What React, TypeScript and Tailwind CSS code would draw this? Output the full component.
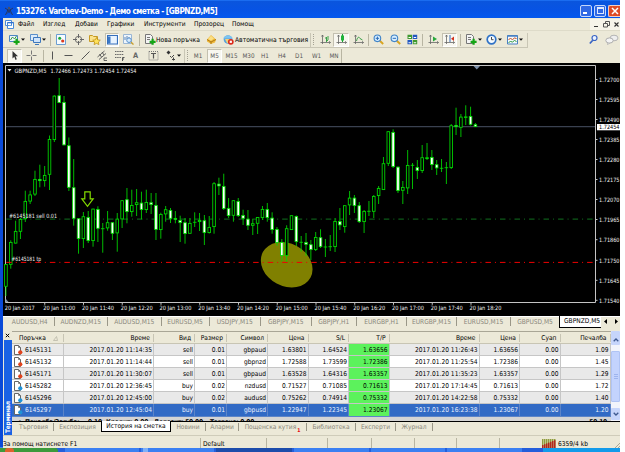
import React from 'react';
import clsx from 'clsx';

type CandleKind = 'up' | 'down' | 'doji';

// [high, low, body top, body bottom, kind]
type Candle = [number, number, number, number, CandleKind];

const CANDLES: Candle[] = [
  [264, 296, 264, 286.7, 'up'],
  [240.3, 268.7, 242, 264.7, 'up'],
  [220.7, 243.5, 231, 243.5, 'up'],
  [218, 239, 219, 231.7, 'up'],
  [190.7, 222, 201, 219, 'up'],
  [190.7, 204, 194.5, 201.5, 'up'],
  [170.7, 196, 179, 194.5, 'up'],
  [164.7, 187.3, 179, 181, 'down'],
  [166, 186.7, 175, 181, 'up'],
  [135.5, 190, 139, 174.7, 'up'],
  [95.3, 142, 95.7, 140, 'up'],
  [78, 103, 95.3, 103, 'down'],
  [96, 145.3, 102, 145.3, 'down'],
  [137.5, 191, 145.3, 187.7, 'down'],
  [159, 225.7, 187.3, 218.7, 'down'],
  [218.3, 253.7, 218.3, 239, 'down'],
  [212, 248, 216.3, 239, 'up'],
  [211, 243, 217, 241, 'down'],
  [208.7, 246.7, 208.7, 241, 'up'],
  [206.3, 242, 209, 228.7, 'down'],
  [223, 252.7, 228.7, 228.7, 'doji'],
  [211, 230.7, 222.3, 228.3, 'up'],
  [222, 240, 222.3, 233.7, 'down'],
  [213, 251.7, 218.7, 233.3, 'up'],
  [200, 228, 200.3, 219.3, 'up'],
  [188, 223.3, 199.3, 212, 'down'],
  [189.7, 216.7, 205, 212, 'up'],
  [189, 216, 202.3, 205, 'up'],
  [191.7, 219.3, 202.7, 210, 'down'],
  [189.7, 213, 202, 210, 'up'],
  [193, 214, 202.3, 205, 'down'],
  [193, 240, 205, 229.8, 'down'],
  [212.7, 238.7, 214, 230, 'up'],
  [206, 221.7, 209.3, 214.3, 'up'],
  [208, 223, 210, 218.7, 'down'],
  [211, 223.3, 218, 219.7, 'down'],
  [215.7, 242, 220, 223, 'down'],
  [218, 243.7, 222.3, 234, 'down'],
  [218, 233.7, 223, 233.7, 'up'],
  [212.3, 227, 222.3, 222.3, 'doji'],
  [213, 231, 220, 222, 'up'],
  [215, 245, 220.3, 233, 'down'],
  [216, 233.5, 227, 233, 'up'],
  [182, 233.7, 183.3, 227, 'up'],
  [177.7, 195, 183.7, 186.3, 'down'],
  [173.7, 210, 186, 209, 'down'],
  [198, 218, 208, 216, 'down'],
  [200.3, 221.7, 200.3, 215.7, 'up'],
  [198, 217, 201, 216, 'down'],
  [209.7, 225, 215, 218.7, 'down'],
  [210, 230, 218.7, 225.7, 'down'],
  [218.7, 235, 223.3, 225.7, 'up'],
  [217, 234, 217, 223.7, 'up'],
  [206, 220, 209, 218, 'up'],
  [203, 221.7, 209, 218, 'down'],
  [212.3, 233.7, 217.7, 230, 'down'],
  [227, 245.7, 229, 243, 'down'],
  [239, 261.3, 242, 256, 'down'],
  [225.3, 262, 228.3, 256, 'up'],
  [215.3, 230, 215.3, 230, 'up'],
  [215.5, 246, 216, 242, 'down'],
  [236, 251.7, 242.3, 242.3, 'doji'],
  [233, 256, 242, 244.7, 'down'],
  [240, 260, 244.3, 250, 'down'],
  [232, 251, 237, 250, 'up'],
  [229.3, 248, 237.3, 247, 'down'],
  [239, 257, 247, 247, 'doji'],
  [235, 251, 246.7, 246.7, 'doji'],
  [218, 252, 221, 247, 'up'],
  [208, 230, 221, 225.3, 'down'],
  [205.3, 232.7, 205.3, 227, 'up'],
  [191, 215, 197.7, 205.3, 'up'],
  [195, 213, 197.7, 206, 'down'],
  [202, 223, 205.3, 222, 'down'],
  [210, 233, 211, 222, 'up'],
  [201, 216, 211.3, 211.3, 'doji'],
  [195, 218, 196, 211.7, 'up'],
  [186, 204, 188, 196, 'up'],
  [157, 190, 163.3, 190, 'up'],
  [131.3, 166, 131.3, 163.7, 'up'],
  [129.3, 168, 132, 167, 'down'],
  [166.5, 193, 166.7, 191, 'down'],
  [181, 204, 187, 190.7, 'up'],
  [150, 194, 165, 188.3, 'up'],
  [163, 189, 165.3, 165.3, 'doji'],
  [160, 179, 167, 171, 'down'],
  [145, 173, 157.3, 171, 'up'],
  [143, 160, 157.3, 159, 'up'],
  [150, 170, 157, 165, 'down'],
  [160, 175, 164.3, 168.3, 'down'],
  [159, 172, 168.3, 168.3, 'doji'],
  [162, 184, 167.7, 167.7, 'doji'],
  [124, 169, 125.3, 168, 'up'],
  [107.7, 135, 125, 127, 'down'],
  [114, 137, 116.7, 127.7, 'up'],
  [105.3, 125, 116.5, 117.7, 'up'],
  [106.7, 125.5, 116, 124.7, 'down'],
  [123, 127, 124.3, 127, 'down'],
];

const PRICES: [string, number][] = [
  ['1.72700', 79.5],
  ['1.72595', 99.5],
  ['1.72490', 119.5],
  ['1.72385', 139.5],
  ['1.72280', 159.5],
  ['1.72175', 179.5],
  ['1.72070', 199.5],
  ['1.71965', 219.5],
  ['1.71860', 239.7],
  ['1.71750', 260.3],
  ['1.71645', 280.3],
  ['1.71540', 300.3],
];

const TIMES = [
  '20 Jan 2017',
  '20 Jan 11:00',
  '20 Jan 11:40',
  '20 Jan 12:20',
  '20 Jan 13:00',
  '20 Jan 13:40',
  '20 Jan 14:20',
  '20 Jan 15:00',
  '20 Jan 15:40',
  '20 Jan 16:20',
  '20 Jan 17:00',
  '20 Jan 17:40',
  '20 Jan 18:20',
];

const MENU: [string, string][] = [
  ['Файл', 'w-[25px]'],
  ['Изглед', 'w-[32px]'],
  ['Добави', 'w-[32px]'],
  ['Графики', 'w-[37px]'],
  ['Инструменти', 'w-[50px]'],
  ['Прозорец', 'w-[38px]'],
  ['Помощ', 'w-[30px]'],
];

const PERIODS: [string, string][] = [
  ['M1', 'w-[18px]'],
  ['M5', 'w-[15px]'],
  ['M15', 'w-[19px]'],
  ['M30', 'w-[15px]'],
  ['H1', 'w-[18px]'],
  ['H4', 'w-[16px]'],
  ['D1', 'w-[18px]'],
  ['W1', 'w-[17px]'],
  ['MN', 'w-[18px]'],
];

const CHART_TABS: [string, string][] = [
  ['AUDUSD,H4', 'w-[51.5px] pl-[3px]'],
  ['AUDNZD,M15', 'w-[53.5px]'],
  ['AUDUSD,M15', 'w-[53.5px]'],
  ['EURUSD,M5', 'w-[48px]'],
  ['USDJPY,M15', 'w-[51.5px]'],
  ['GBPJPY,M15', 'w-[50.5px]'],
  ['GBPJPY,H1', 'w-[45.5px]'],
  ['EURGBP,H1', 'w-[50px]'],
  ['EURGBP,M15', 'w-[50px]'],
  ['EURUSD,M15', 'w-[54px]'],
  ['GBPUSD,M5', 'w-[48px]'],
];

const TERMINAL_TABS: [string, string][] = [
  ['Търговия', 'w-[42px] pl-[2px]'],
  ['Експозиция', 'w-[47px]'],
  ['История на сметка', 'w-[70px]'],
  ['Новини', 'w-[35px]'],
  ['Аларми', 'w-[33px]'],
  ['Пощенска кутия', 'w-[68px]'],
  ['Библиотека', 'w-[49px]'],
  ['Експерти', 'w-[40px]'],
  ['Журнал', 'w-[37px]'],
];

const COLUMNS = ['Поръчка', 'Време', 'Вид', 'Размер', 'Символ', 'Цена', 'S/L', 'T/P', 'Време', 'Цена', 'Суап', 'Печалба'];

const ROWS = [
  ['6145131', '2017.01.20 11:14:35', 'sell', '0.01', 'gbpaud', '1.63801', '1.64524', '1.63656', '2017.01.20 11:26:43', '1.63656', '0.00', '1.09'],
  ['6145132', '2017.01.20 11:14:44', 'sell', '0.01', 'gbpnzd', '1.72588', '1.73599', '1.72386', '2017.01.20 11:25:54', '1.72386', '0.00', '1.45'],
  ['6145171', '2017.01.20 11:30:07', 'sell', '0.01', 'gbpaud', '1.63528', '1.64316', '1.63357', '2017.01.20 11:35:23', '1.63357', '0.00', '1.29'],
  ['6145282', '2017.01.20 12:36:45', 'buy', '0.02', 'nzdusd', '0.71527', '0.71085', '0.71613', '2017.01.20 17:14:45', '0.71613', '0.00', '1.72'],
  ['6145296', '2017.01.20 12:45:00', 'buy', '0.02', 'audusd', '0.75262', '0.74914', '0.75332', '2017.01.20 14:22:58', '0.75332', '0.00', '1.40'],
  ['6145297', '2017.01.20 12:45:04', 'buy', '0.01', 'gbpusd', '1.22947', '1.22345', '1.23067', '2017.01.20 16:23:38', '1.23067', '0.00', '1.20'],
];

const GRID =
  'grid grid-cols-[52px_90px_41px_32px_41px_40.5px_40.5px_40.5px_90px_40.5px_40.5px_50px]';

const Sep = () => <div className="w-px h-[12px] bg-[#b8b5a2] shrink-0" />;

const Grip = () => <div className="w-[2px] h-[11px] border-l border-dotted border-[#a5a294] shrink-0" />;

const Slot = ({ w, active, children }: { w: string; active?: boolean; children?: React.ReactNode }) => (
  <div
    className={clsx(
      'h-[14px] flex items-center shrink-0',
      w,
      active && 'bg-[#f8f7f0] border border-[#c3c0b0] border-r-white border-b-white justify-center',
    )}
  >
    {children}
  </div>
);

const Icon = ({ children, w = 11 }: { children: React.ReactNode; w?: number }) => (
  <svg width={w} height="11" viewBox={`0 0 ${w} 11`} className="shrink-0" fill="none">
    {children}
  </svg>
);

const Drop = () => (
  <svg width="4" height="3" viewBox="0 0 4 3" className="shrink-0 ml-px">
    <path d="M0 .5h4L2 2.8z" fill="#111" />
  </svg>
);

const Axes = ({ children }: { children: React.ReactNode }) => (
  <Icon>
    <path d="M2.5 1v9M.5 8.5h10M1.5 2.5l1-1.5 1 1.5M9 7.3l1.5 1.2L9 9.7" stroke="#666" strokeWidth=".8" />
    {children}
  </Icon>
);

const Magnifier = ({ plus }: { plus?: boolean }) => (
  <Icon>
    <path d="M6.8 6.8l3.4 3.2" stroke="#d9a520" strokeWidth="1.9" />
    <circle cx="4.4" cy="4.3" r="3.3" fill="#d8efff" stroke="#3f83c8" strokeWidth="1.1" />
    <path d="M2.7 4.3h3.4" stroke="#2a6ab8" />
    {plus && <path d="M4.4 2.6V6" stroke="#2a6ab8" />}
  </Icon>
);

const Plus = () => <path d="M7.6 4.8v6M4.6 7.8h6" stroke="#15a515" strokeWidth="2.2" />;

const TitleBar = () => (
  <div className="h-[18px] flex items-center bg-linear-to-b from-[#0a55dd] via-[#0753e4] to-[#0458ee] border-t border-[#1a6cf0] pl-[4px] shrink-0">
    <svg width="10" height="10" viewBox="0 0 10 10" fill="none" className="shrink-0 mt-[2px]">
      <path d="M1 2l3 2-2.5 5M9 2L6 4l2.5 5M3.5 4h3M3.500 7L6.800 4M6.500 7L3.200 4" stroke="#2b3350" strokeWidth=".9" />
      <circle cx="5" cy="2" r="1.3" fill="#4a5068" />
    </svg>
    <span className="ml-[2px] mt-[3px] text-[8.2px] font-bold text-white font-['DejaVu_Sans_Condensed','Noto_Sans',sans-serif] tracking-[-0.48px]">
      153276: Varchev-Demo - Демо сметка - [GBPNZD,M5]
    </span>
    <div className="ml-auto flex gap-[2px] mt-[2px]">
      <div className="w-[12px] h-[12px] rounded-[2px] border border-[#c5d8fb] bg-[#2f68e4] flex items-end p-[2px]">
        <div className="w-[4px] h-[1.5px] bg-white" />
      </div>
      <div className="w-[12px] h-[12px] rounded-[2px] border border-[#c5d8fb] bg-[#2f68e4] p-[1.5px]">
        <div className="w-[7px] h-[7px] border border-t-2 border-[#dfe9ff]" />
      </div>
      <div className="w-[12px] h-[12px] rounded-l-[2px] border border-r-0 border-[#f3cfc4] bg-[#de4c26] flex items-center justify-center">
        <svg width="8" height="8" viewBox="0 0 8 8">
          <path d="M1 1l6 6M7 1L1 7" stroke="#fff" strokeWidth="1.5" />
        </svg>
      </div>
    </div>
  </div>
);

const MenuBar = () => (
  <div className="h-[13px] flex items-center pl-[2px] shrink-0 border-b border-[#dedbc9]">
    <svg width="9" height="10" viewBox="0 0 9 10" fill="none">
      <path d="M.5 1.5h6v5h-6zM2.5 3.5h6v6h-6z" fill="#fff" stroke="#4a8ad8" />
      <path d="M2.5 3.7h6" stroke="#2d6fd0" strokeWidth="1.2" />
      <path d="M4 7l1-1 1 1 1-1" stroke="#6ba4e4" />
    </svg>
    <div className="flex ml-[4px]">
      {MENU.map(([label, w]) => (
        <span key={label} className={clsx('shrink-0', w)}>{label}</span>
      ))}
    </div>
    <div className="ml-auto flex items-center">
      <div className="w-[11px] h-[11px] bg-[#f6f4ea] flex items-end justify-center pb-[3px]">
        <div className="w-[4px] h-px bg-[#333]" />
      </div>
      <svg width="11" height="11" viewBox="0 0 11 11" fill="none" className="bg-[#f6f4ea]">
        <path d="M4.5 4V2.5h4v4H7M2.5 4.5h4v3.5h-4z" stroke="#555" />
      </svg>
      <svg width="8" height="11" viewBox="0 0 8 11" fill="none" className="bg-[#f6f4ea]">
        <path d="M2.5 3.5l4 4M6.5 3.5l-4 4" stroke="#333" strokeWidth="1.1" />
      </svg>
    </div>
  </div>
);

const MainToolbar = () => (
  <div className="h-[17px] flex items-center shrink-0">
    <div className="h-[15px] flex items-center border-r border-b border-[#c9c6b5] w-[308px] shrink-0 pl-[6px] mt-px">
      <Slot w="w-[21px]">
        <Icon>
          <path d="M.5 1.5h8v6h-8z" fill="#eef6ff" stroke="#4d86c4" />
          <path d="M1.5 6l2-3 2 2 2-3" stroke="#3a9a3a" />
          <Plus />
        </Icon>
        <Drop />
      </Slot>
      <Slot w="w-[20px]">
        <Icon>
          <path d="M.5.5h7v6h-7z" fill="#dcebfa" stroke="#5a8fcb" />
          <path d="M3.5 3.5h7v5h-7z" fill="#cfe4fb" stroke="#3f78bd" />
          <path d="M5 10.5h4" stroke="#3f78bd" />
        </Icon>
        <Drop />
      </Slot>
      <Sep />
      <Slot w="w-[18px] pl-[5px]">
        <Icon>
          <path d="M.5.5h9v10h-9z" fill="#f6fbff" stroke="#6c9dd2" />
          <circle cx="3.7" cy="4.2" r="1.5" fill="#1ea838" />
          <circle cx="6.7" cy="7" r="1.6" fill="#dc3a20" />
        </Icon>
      </Slot>
      <Slot w="w-[17px] pl-[4px]">
        <Icon>
          <circle cx="5.5" cy="5.5" r="3.2" stroke="#666" strokeWidth=".9" />
          <path d="M5.5 0v4M5.5 7v4M0 5.5h4M7 5.5h4" stroke="#666" />
        </Icon>
      </Slot>
      <Slot w="w-[19px] pl-[3px]">
        <Icon w={12}>
          <path d="M.5 1.5h3l1 1h4v5h-8z" fill="#fbe38c" stroke="#c69a24" />
          <path d="M7.500 3.500l1.200 2.300 2.600.4-1.900 1.800.5 2.600-2.400-1.200L5.100 10.600l.5-2.600-1.900-1.800 2.600-.4z" fill="#ffe25a" stroke="#b98a10" strokeWidth=".7" />
        </Icon>
      </Slot>
      <Slot w="w-[14px]" active>
        <Icon>
          <path d="M.5 1.5h10v8.500H.5z" fill="#e8f3ff" stroke="#356fbc" strokeWidth="1.2" />
          <path d="M1 2.500h2.500v7H1z" fill="#3b78c8" />
        </Icon>
      </Slot>
      <Slot w="w-[20px] pl-[4px]">
        <Icon>
          <path d="M.5.5h8v9h-8z" fill="#eef5fc" stroke="#9ab6d4" />
          <path d="M2 3v3M4 2v3M6 3v3" stroke="#5e86b5" />
          <path d="M7.8 8l2.700 2.500" stroke="#c9a030" strokeWidth="1.4" />
          <circle cx="6" cy="6.2" r="2.3" fill="#d5eafc" stroke="#5b93cf" />
        </Icon>
      </Slot>
      <Sep />
      <Slot w="w-[65px] pl-[5px]">
        <Icon>
          <path d="M.5.5h5l2 2v7h-7z" fill="#f4f4f4" stroke="#777" />
          <path d="M2 3.500h3M2 5.500h3" stroke="#777" />
          <Plus />
        </Icon>
        <span className="text-[6.7px] whitespace-nowrap">Нова поръчка</span>
      </Slot>
      <Slot w="w-[18px] pl-[1px]">
        <Icon>
          <path d="M1 5.500L5 1l5 4.500-1 3L5 10 1 7.500z" fill="#efba3c" />
          <path d="M1 5.500L5 8l5-2.500M5 8v2" stroke="#a8720e" strokeWidth=".9" />
          <path d="M2 5l3-3.200L8 4.500 5 6.800z" fill="#fbdf83" />
        </Icon>
      </Slot>
      <Slot w="w-[84px]">
        <Icon>
          <circle cx="5" cy="5.5" r="4.3" fill="#5aa2dc" />
          <path d="M0 4.500C2 .5 8 .5 10 4.500z" fill="#7cc3f0" />
          <path d="M2 5h6l-2 4H4z" fill="#f2d27a" />
          <circle cx="7.8" cy="7.8" r="2.9" fill="#dc2b1c" />
          <path d="M6.700 6.700h2.200v2.200H6.700z" fill="#fff" />
        </Icon>
        <span className="ml-px text-[6.7px] whitespace-nowrap">Автоматична търговия</span>
      </Slot>
    </div>
    <div className="h-[15px] flex items-center border-r border-b border-[#c9c6b5] w-[217px] shrink-0 mt-px pl-[2px]">
      <Grip />
      <Slot w="w-[18px] pl-[5px]">
        <Axes><path d="M6.500 3v5M5 4h1.500M6.500 6.500H8M8 2v4" stroke="#2b9a3c" strokeWidth=".9" /></Axes>
      </Slot>
      <Slot w="w-[16px]" active>
        <Axes><path d="M6.500 0v8" stroke="#19a030" /><path d="M5 1.500h3v5H5z" fill="#20b23a" /></Axes>
      </Slot>
      <Slot w="w-[19px] pl-[4px]">
        <Axes><path d="M3.500 7C4.500 2.500 6 2.500 7 4.500l2.500 1.500" stroke="#2b9a3c" strokeWidth=".9" /></Axes>
      </Slot>
      <Sep />
      <Slot w="w-[17px] pl-[4px]"><Magnifier plus /></Slot>
      <Slot w="w-[17px] pl-[4px]"><Magnifier /></Slot>
      <Slot w="w-[19px] pl-[4px]">
        <Icon>
          <path d="M.5.8h4.500v4.200H.5zM5.700 6h4.500v4.200H5.700z" fill="#3f9a30" />
          <path d="M5.700.8h4.500v4.200H5.700zM.5 6h4.500v4.200H.5z" fill="#2358c0" />
          <path d="M1.500 3h2.500v1H1.500zM6.700 3h2.500v1H6.700zM1.500 8.200h2.500v1H1.500zM6.700 8.200h2.500v1H6.700z" fill="#fff" />
        </Icon>
      </Slot>
      <Sep />
      <Slot w="w-[19px] pl-[5px]">
        <Axes><path d="M5 2.500l4 2.500-4 2.500z" fill="#28a83c" /></Axes>
      </Slot>
      <Slot w="w-[15px]" active>
        <Axes><path d="M6 1v7" stroke="#356ab8" /><path d="M10 2.500v4.500L7 4.700z" fill="#d2301c" /></Axes>
      </Slot>
      <Slot w="w-[3px]" />
      <Sep />
      <Slot w="w-[21px] pl-[5px]">
        <Icon>
          <path d="M.5.5h5l2 2v7h-7z" fill="#f4f4f4" stroke="#777" />
          <path d="M2 3.500h3M2 5.500h3" stroke="#777" />
          <Plus />
        </Icon>
        <Drop />
      </Slot>
      <Slot w="w-[22px] pl-[4px]">
        <Icon>
          <circle cx="5.5" cy="5.5" r="4.3" fill="#f4faff" stroke="#2f72c6" strokeWidth="1.7" />
          <path d="M5.500 3v2.700h2" stroke="#333" strokeWidth=".9" />
        </Icon>
        <Drop />
      </Slot>
      <Slot w="w-[20px] pl-[3px]">
        <Icon>
          <path d="M.5 1.500h10v8.500H.5z" fill="#f3f8fe" stroke="#4980c2" />
          <path d="M.5 2h10" stroke="#4980c2" strokeWidth="1.5" />
          <path d="M1.500 5.500l2-1 2 1 2-1.500 2 .5" stroke="#c8501c" />
          <path d="M1.500 8.500l2-1 2 .5 2-1.500 2 1" stroke="#2e9a3c" />
        </Icon>
        <Drop />
      </Slot>
    </div>
    <div className="ml-auto flex items-center gap-[7px] pr-px">
      <Icon w={9}>
        <path d="M3.800 6.200L.8 9.500" stroke="#3a64c4" strokeWidth="1.7" />
        <circle cx="5.5" cy="4" r="2.5" fill="#eaf2ff" stroke="#3a64c4" strokeWidth="1.2" />
      </Icon>
      <svg width="14" height="11" viewBox="0 0 14 11" fill="none">
        <ellipse cx="9" cy="4" rx="4" ry="2.8" fill="#eee" stroke="#b5b5b5" />
        <ellipse cx="4.5" cy="6.5" rx="3.7" ry="2.6" fill="#f4f4f4" stroke="#adadad" />
        <path d="M3 8.500L2.500 10.500 5 9" fill="#f4f4f4" stroke="#adadad" strokeWidth=".8" />
      </svg>
    </div>
  </div>
);

const DrawToolbar = () => (
  <div className="h-[15px] flex items-center shrink-0 text-[#555]">
    <div className="w-[182px] h-[14px] flex items-center border-r border-[#c9c6b5] pl-[4px]">
      <Slot w="w-[15px]" active>
        <Icon w={8}>
          <path d="M1.500 1v7.500l1.800-1.700L4.500 10l1.300-.7L4.600 6.300h2.400z" fill="#333" />
        </Icon>
      </Slot>
      <Slot w="w-[21px] pl-[4px]">
        <Icon><path d="M5.500.5v4M5.500 6.500v4M.5 5.500h4M6.500 5.500h4" stroke="#777" /></Icon>
      </Slot>
      <Sep />
      <Slot w="w-[19px] pl-[3px]"><Icon><path d="M5.500 1.500v8" stroke="#555" /></Icon></Slot>
      <Slot w="w-[17px]"><Icon><path d="M1.500 5.500h8" stroke="#555" /></Icon></Slot>
      <Slot w="w-[17px]"><Icon><path d="M1.500 9.500l8-8" stroke="#555" /></Icon></Slot>
      <Slot w="w-[17px]">
        <Icon>
          <path d="M.5 7l7-6M2 9.500l7-6M2.500 4l2 3M5 2l2 3M7 8h3M7 10.500h3M7 8v2.500" stroke="#555" strokeWidth=".9" />
        </Icon>
      </Slot>
      <Slot w="w-[17px]">
        <Icon>
          <path d="M1 1.500h9M1 4.500h9M1 7.500h6" stroke="#666" strokeDasharray="1.5 .7" />
          <path d="M8.500 11V7.500h2M8.500 9h1.500" stroke="#555" />
        </Icon>
      </Slot>
      <Slot w="w-[17px] pl-[2px]"><span className="text-[7.4px] font-bold text-[#666]">A</span></Slot>
      <Slot w="w-[18px]">
        <Icon>
          <path d="M1 1.500h9v8.500H1z" stroke="#777" strokeDasharray="1 1" />
          <path d="M3 3.500h5M5.500 3.500v5" stroke="#555" strokeWidth="1.2" />
        </Icon>
      </Slot>
      <Slot w="w-[17px]">
        <Icon w={10}>
          <path d="M2.500.5l2 2-2 2-2-2z" fill="#333" />
          <path d="M4 6l1.500 1.500L8 5M6 9.500h3M7.500 7.500v3" stroke="#444" />
        </Icon>
        <Drop />
      </Slot>
    </div>
    <div className="w-[157px] h-[14px] flex items-center border-r border-[#b8b5a2] pl-[2px]">
      <Grip />
      {PERIODS.map(([p, w]) => (
        <div
          key={p}
          className={clsx(
            'flex items-center justify-center h-[14px] shrink-0 text-[6.3px]',
            w,
            p === 'M5' && 'bg-[#f8f7f0] border border-[#c3c0b0] border-r-white border-b-white',
          )}
        >
          {p}
        </div>
      ))}
    </div>
  </div>
);

const CandleShape = ({ index, candle }: { index: number; candle: Candle }) => {
  const [high, low, top, bottom, kind] = candle;
  const x = 5.94 + index * 4.84;

  if (kind === 'doji') {
    return <path d={`M${x} ${high}V${low}M${x - 1.8} ${top}h3.6`} stroke="#00dc00" strokeWidth=".85" />;
  }
  return (
    <g stroke="#00dc00" strokeWidth=".85">
      <path d={`M${x} ${high}V${low}`} />
      <rect
        x={x - 1.3}
        y={top + 0.4}
        width="2.6"
        height={Math.max(bottom - top - 0.8, 0.6)}
        fill={kind === 'up' ? '#000' : '#fff'}
      />
    </g>
  );
};

const Chart = () => (
  <svg
    width="617"
    height="253"
    viewBox="3 63 617 253"
    className="block shrink-0 bg-black font-['DejaVu_Sans_Condensed','Noto_Sans',sans-serif]"
    fill="none"
  >
    <path d="M5.500 302.500V65.500H595.500V302.500H5.500" stroke="#c4c4c4" />
    <path d="M6 126.600H595" stroke="#3a4150" strokeWidth="1.3" />
    <path d="M6.300 219.200H595" stroke="#0d5a18" strokeWidth="1.3" strokeDasharray="5.5 4 1 4.02" />
    <ellipse cx="286.7" cy="264.8" rx="27" ry="21.3" transform="rotate(28 286.7 264.8)" fill="#808000" />
    {CANDLES.map((c, i) => (
      <CandleShape key={i} index={i} candle={c} />
    ))}
    <path d="M6.300 262.400H595" stroke="#f00000" strokeDasharray="5.5 4 1 4.02" />
    <path d="M84.800 191.800h5.400v7h3l-5.700 7.500-5.700-7.500h3z" stroke="#84dc00" strokeWidth="1.2" />
    <path d="M473.500 66h6.500l-3.200 3.500z" fill="#7a8ea8" />
    <path d="M5.500 302v-3.500l3 3.500z" fill="#7a8ea8" />

    <g fill="#f0f0f0" fontSize="5.9">
      <path d="M7.500 69h4l-2 2.500z" />
      <text x="14.5" y="73" textLength="32" lengthAdjust="spacingAndGlyphs">GBPNZD,M5</text>
      <text x="50.5" y="73" textLength="86" lengthAdjust="spacingAndGlyphs">1.72466 1.72473 1.72454 1.72454</text>
      <text x="9" y="217.6" textLength="48" lengthAdjust="spacingAndGlyphs">#6145181 sell 0.01</text>
      <text x="11.5" y="261.3" textLength="29.5" lengthAdjust="spacingAndGlyphs">#6145181 tp</text>
      {PRICES.map(([label, y]) => (
        <g key={label}>
          <path d={`M596 ${y}h1.5`} stroke="#c4c4c4" />
          <text x="599" y={y + 2.2} textLength="20.5" lengthAdjust="spacingAndGlyphs">{label}</text>
        </g>
      ))}
      {TIMES.map((label, i) => {
        const x = 4.8 + i * 38.75;
        return (
          <g key={label}>
            {i > 0 && <path d={`M${x + 1.2} 303v1.8`} stroke="#c4c4c4" />}
            <text x={i ? x - 0.3 : x} y="310.3" textLength={i ? 32 : 30} lengthAdjust="spacingAndGlyphs">
              {label}
            </text>
          </g>
        );
      })}
    </g>

    <rect x="597" y="124" width="23" height="6.3" fill="#fff" />
    <text x="599" y="129.4" textLength="20.5" lengthAdjust="spacingAndGlyphs" fontSize="5.9" fill="#000">1.72454</text>
  </svg>
);

const ChartTabs = () => (
  <div className="h-[15px] flex items-start shrink-0 border-t border-white text-[#8a887c]">
    {CHART_TABS.map(([label, w], i) => (
      <div key={label} className={clsx('h-[9px] shrink-0 flex items-center justify-center', w, i < 10 && 'border-r border-[#9a9788]')}>
        {label}
      </div>
    ))}
    <div className="w-[42px] h-[12px] bg-white border-l border-b border-black text-black flex items-center pl-[4px] -mt-px pb-px whitespace-nowrap">
      GBPNZD,M5
    </div>
    <div className="flex-1 flex justify-between items-center h-[9px] pl-[3px] pr-[2px]">
      <svg width="3" height="5" viewBox="0 0 3 5"><path d="M3 0v5L0 2.500z" fill="#000" /></svg>
      <svg width="3" height="5" viewBox="0 0 3 5"><path d="M0 0v5l3-2.500z" fill="#000" /></svg>
    </div>
  </div>
);

const OrderIcon = ({ sell }: { sell: boolean }) => (
  <svg width="9" height="10" viewBox="0 0 9 10" fill="none" className="shrink-0">
    <path d="M.5.5h4l2 2v7h-6z" fill="#fff" stroke="#666" />
    <path d="M4.500.5v2h2" stroke="#666" strokeWidth=".8" />
    <circle cx="6.3" cy="7.3" r="2.1" fill={sell ? '#e2431c' : '#1f93d8'} />
  </svg>
);

const Orders = () => (
  <div className="flex-1 flex flex-col h-[90px] overflow-hidden border-t border-[#a9a696]">
    <div className={clsx(GRID, 'h-[12px] shrink-0 bg-[#ece9d8] border-b border-[#c8c5b4]')}>
      {COLUMNS.map((col, i) => (
        <div
          key={i}
          className={clsx(
            'my-[2px] border-r border-[#c8c5b4] flex items-center pr-[3px]',
            i === 0 ? 'pl-[7px]' : 'justify-end',
          )}
        >
          {col}
          {i === 0 && (
            <svg width="5" height="5" viewBox="0 0 5 5" className="ml-[7px]" fill="none">
              <path d="M.5 4.500h4L3.500.5z" stroke="#bbb8a8" strokeWidth=".8" />
            </svg>
          )}
        </div>
      ))}
    </div>
    {ROWS.map((row, r) => {
      const selected = r === ROWS.length - 1;
      return (
        <div
          key={row[0]}
          className={clsx(
            GRID,
            'h-[12.1px] shrink-0',
            selected ? 'bg-[#316ac5] text-[#e8f0ff]' : r % 2 ? 'bg-white' : 'bg-[#e9e9e9]',
          )}
        >
          {row.map((cell, i) => (
            <div
              key={i}
              className={clsx(
                'flex items-center border-r border-b pr-[1px]',
                selected ? 'border-[#5c84c8]' : 'border-[#c6c6c6]',
                i === 0 ? 'pl-[2px]' : 'justify-end',
                i === 7 && 'bg-[#5cf25c] text-black',
              )}
            >
              {i === 0 && (
                <span className="mr-[2px] flex">
                  <OrderIcon sell={row[2] === 'sell'} />
                </span>
              )}
              {cell}
            </div>
          ))}
        </div>
      );
    })}
    {/* summary row, scrolled half out of view */}
    <div className="h-[5px] bg-[#d4d4d4] shrink-0 overflow-hidden font-bold leading-[10px] flex pl-[6px] whitespace-nowrap tracking-[-0.2px]">
      <span className="w-[7px]">•</span>
      <span className="w-[63px]">Печалба/Загуба:</span>
      <span className="w-[18px]">9.10</span>
      <span className="w-[48px]">Кредит: 0.00</span>
      <span className="w-[56px]">Депозит: 50.00</span>
      <span>Теглене: 0.00</span>
      <span className="ml-auto pr-[4px]">59.10</span>
    </div>
  </div>
);

const Scrollbar = () => (
  <div className="w-[9px] h-[90px] bg-[#f2f4fb] flex flex-col shrink-0">
    <div className="h-[14px] pt-[3px] bg-[#c6d5fb] rounded-[1px] flex items-center justify-center">
      <svg width="6" height="4" viewBox="0 0 6 4" fill="none"><path d="M.7 3.300L3 1l2.300 2.300" stroke="#3f5a90" strokeWidth="1.3" /></svg>
    </div>
    <div className="h-[51px] mt-[6px] bg-[#c3d3fd] border border-[#b0c4f4] rounded-[1px] flex flex-col items-center justify-center gap-px">
      <div className="w-[4px] h-px bg-[#9db4ee]" />
      <div className="w-[4px] h-px bg-[#9db4ee]" />
      <div className="w-[4px] h-px bg-[#9db4ee]" />
    </div>
    <div className="h-[12px] mt-auto mb-px bg-[#c6d5fb] rounded-[1px] flex items-center justify-center">
      <svg width="6" height="4" viewBox="0 0 6 4" fill="none"><path d="M.7.7L3 3 5.300.7" stroke="#3f5a90" strokeWidth="1.3" /></svg>
    </div>
  </div>
);

const Terminal = () => (
  <div className="h-[104px] flex shrink-0">
    <div className="w-[9px] flex flex-col items-center shrink-0">
      <svg width="5" height="9" viewBox="0 0 5 9" fill="none"><path d="M.8 2.800l3.400 3.400M4.200 2.800L.8 6.200" stroke="#000" /></svg>
      <div className="w-[8px] flex-1 bg-[#1a62e4] text-white flex items-center [writing-mode:vertical-rl] rotate-180 text-[6.4px] font-semibold leading-[8px] pt-[2px] tracking-[-0.1px]">
        Терминал
      </div>
    </div>
    <div className="flex-1 flex flex-col min-w-0">
      <div className="flex">
        <Orders />
        <Scrollbar />
      </div>
      <div className="flex-1 border-t border-black flex items-start text-[#8a887c]">
        {TERMINAL_TABS.map(([label, w], i) => (
          <div
            key={label}
            className={clsx(
              'shrink-0 flex items-center justify-center whitespace-nowrap',
              w,
              i === 2
                ? 'h-[11px] -mt-px bg-white border border-t-0 border-black text-black'
                : 'h-[8px] mt-px',
              i !== 1 && i !== 2 && 'border-r border-[#9a9788]',
            )}
          >
            {label}
            {i === 5 && <span className="text-red-600 font-bold text-[5px] ml-px mt-[5px]">1</span>}
          </div>
        ))}
      </div>
    </div>
  </div>
);

const StatusBar = () => (
  <div className="h-[13px] flex items-center shrink-0 border-t border-[#cfccba] pt-[3px]">
    <span className="w-[197px] shrink-0">За помощ натиснете F1</span>
    <Sep />
    <span className="w-[65px] pl-[2px] shrink-0">Default</span>
    <Sep />
    <div className="w-[60px]" />
    <Sep />
    <div className="w-[43px]" />
    <Sep />
    <div className="w-[42px]" />
    <Sep />
    <div className="w-[41px]" />
    <Sep />
    <div className="w-[42px]" />
    <Sep />
    <div className="w-[42px]" />
    <svg width="14" height="9" viewBox="0 0 14 9">
      {[0, 2, 4, 6, 8, 10, 12].map((x, i) => (
        <g key={x}>
          <rect x={x} y="0" width="1.5" height="9" fill="#8f9c3c" />
          <rect x={x} y={6 - i * 0.8} width="1.5" height={3 + i * 0.8} fill="#b3261e" />
        </g>
      ))}
    </svg>
    <span className="ml-[2px]">6359/4 kb</span>
    <svg width="6" height="6" viewBox="0 0 6 6" className="ml-auto self-end"><path d="M1 6l5-5M4 6l2-2" stroke="#aaa795" /></svg>
  </div>
);

const TaskBar = () => (
  <div className="w-[620px] h-[5px] flex shrink-0 bg-[#245edb] border-t border-[#3f83f0]">
    <div className="w-[58px] bg-[#3c9a3c] pl-[5px] rounded-tr-[3px]">
      <div className="w-[9px] h-[4px] bg-[#e0622c] rounded-t-[3px]" />
    </div>
    <div className="w-[7px]" />
    <div className="w-[74px] bg-[#3b80f2]" />
    <div className="w-[2px]" />
    <div className="w-[73px] bg-[#3b80f2] pl-[2px]">
      <div className="w-[5px] h-[4px] bg-[#7fb0f8]" />
    </div>
    <div className="w-[2px]" />
    <div className="w-[76px] bg-[#1c4cab]" />
    <div className="w-[2px]" />
    <div className="w-[75px] bg-[#3b80f2]" />
    <div className="w-[2px]" />
    <div className="w-[74px] bg-[#3b80f2]" />
    <div className="w-[2px]" />
    <div className="w-[75px] bg-[#3b80f2]" />
    <div className="flex-1" />
    <div className="w-[77px] bg-[#139bea]" />
  </div>
);

export default function App() {
  return (
    <div className="w-[625px] h-[452px] bg-white overflow-hidden font-['DejaVu_Sans_Condensed','Noto_Sans',sans-serif] text-[6.6px] leading-[8px] text-black">
      <div className="w-[620px] h-[447px] bg-[#0a4ad8] flex flex-col">
        <TitleBar />
        <div className="ml-[3px] w-[617px] bg-[#ece9d8] flex flex-col flex-1">
          <MenuBar />
          <MainToolbar />
          <DrawToolbar />
          <Chart />
          <ChartTabs />
          <Terminal />
          <StatusBar />
        </div>
      </div>
      <TaskBar />
    </div>
  );
}
